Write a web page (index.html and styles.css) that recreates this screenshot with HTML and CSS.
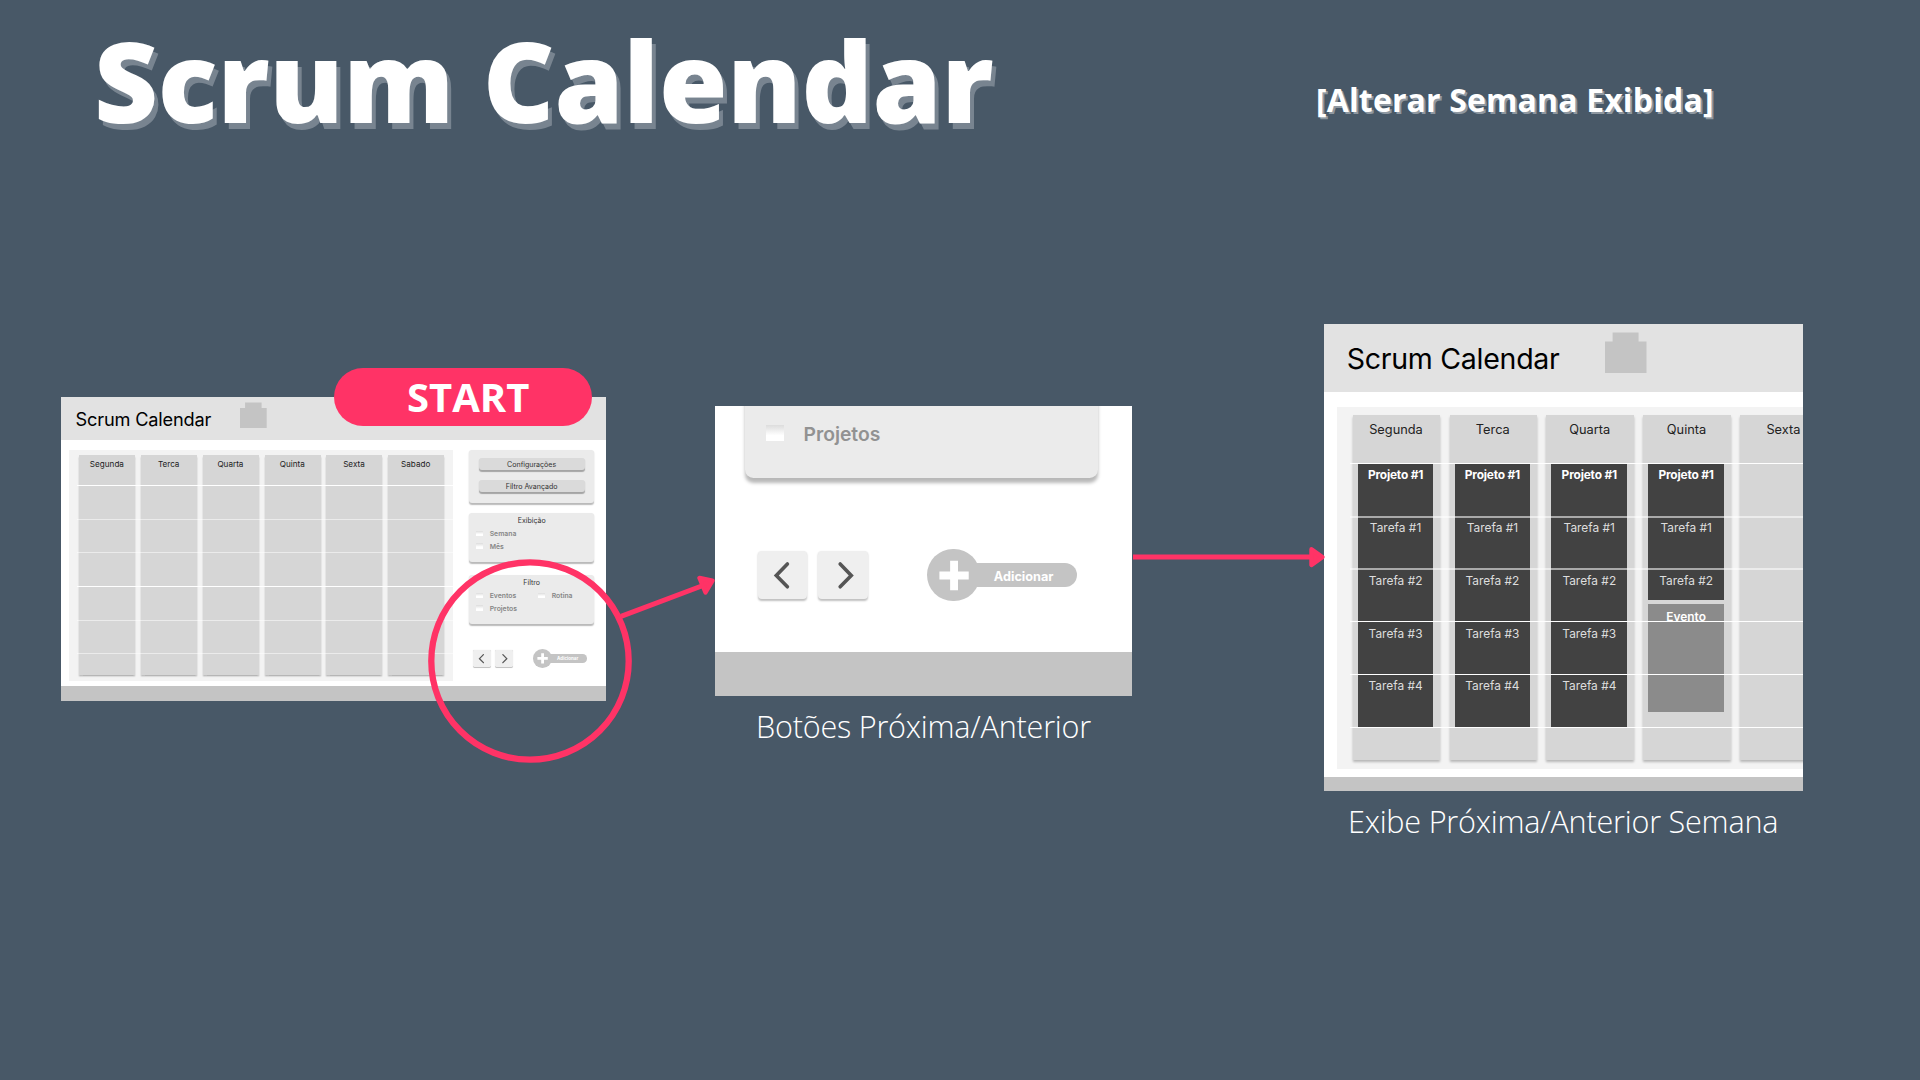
FILE: index.html
```html
<!DOCTYPE html>
<html lang="pt-BR">
<head>
<meta charset="utf-8">
<title>Scrum Calendar</title>
<link rel="stylesheet" href="styles.css">
</head>
<body>
<header class="top">
  <h1 class="title">Scrum Calendar</h1>
  <h2 class="subtitle">[Alterar Semana Exibida]</h2>
</header>
<main class="flow">
  <section class="screen home">
    <div class="bar"><span class="brand">Scrum Calendar</span><i class="logo"></i></div>
    <div class="content">
      <div class="week">
        <div class="day"><b>Segunda</b></div>
        <div class="day"><b>Terca</b></div>
        <div class="day"><b>Quarta</b></div>
        <div class="day"><b>Quinta</b></div>
        <div class="day"><b>Sexta</b></div>
        <div class="day"><b>Sabado</b></div>
        <div class="lines"><i></i><i></i><i></i><i></i><i></i><i></i></div>
      </div>
      <aside class="side">
        <div class="panel actions"><span class="btn">Configurações</span><span class="btn">Filtro Avançado</span></div>
        <div class="panel view">
          <h3>Exibição</h3>
          <div class="checks"><label><i></i>Semana</label><label class="first"><i></i>Mês</label></div>
        </div>
        <div class="panel filter">
          <h3>Filtro</h3>
          <div class="checks"><label><i></i>Eventos</label><label><i></i>Rotina</label><label><i></i>Projetos</label></div>
        </div>
        <div class="nav">
          <span class="step"><svg viewBox="0 0 18 17"><path d="M10.600 4.500 6.600 8.600l4 4.100"/></svg></span>
          <span class="step"><svg viewBox="0 0 18 17"><path d="m8 4.500 4 4.100-4 4.100"/></svg></span>
          <span class="add"><i class="plus"><svg viewBox="0 0 18.7 18.7"><path d="M9.600 4.200v10.400M4.400 9.400h10.400"/></svg></i><em>Adicionar</em></span>
        </div>
      </aside>
    </div>
    <div class="foot"></div>
  </section>

  <section class="screen detail">
    <aside class="side">
      <div class="panel filter">
        <div class="checks"><label><i></i>Eventos</label><label><i></i>Rotina</label><label><i></i>Projetos</label></div>
      </div>
      <div class="nav">
        <span class="step"><svg viewBox="0 0 18 17"><path d="M10.600 4.500 6.600 8.600l4 4.100"/></svg></span>
        <span class="step"><svg viewBox="0 0 18 17"><path d="m8 4.500 4 4.100-4 4.100"/></svg></span>
        <span class="add"><i class="plus"><svg viewBox="0 0 18.7 18.7"><path d="M9.600 4.200v10.400M4.400 9.400h10.400"/></svg></i><em>Adicionar</em></span>
      </div>
    </aside>
    <div class="foot"></div>
  </section>
  <p class="caption caption-detail">Botões Próxima/Anterior</p>

  <section class="screen result">
    <div class="bar"><span class="brand">Scrum Calendar</span><i class="logo"></i></div>
    <div class="content">
      <div class="week">
        <div class="day"><b>Segunda</b><p class="task project">Projeto #1</p><p class="task">Tarefa #1</p><p class="task">Tarefa #2</p><p class="task">Tarefa #3</p><p class="task">Tarefa #4</p></div>
        <div class="day"><b>Terca</b><p class="task project">Projeto #1</p><p class="task">Tarefa #1</p><p class="task">Tarefa #2</p><p class="task">Tarefa #3</p><p class="task">Tarefa #4</p></div>
        <div class="day"><b>Quarta</b><p class="task project">Projeto #1</p><p class="task">Tarefa #1</p><p class="task">Tarefa #2</p><p class="task">Tarefa #3</p><p class="task">Tarefa #4</p></div>
        <div class="day"><b>Quinta</b><p class="task project">Projeto #1</p><p class="task">Tarefa #1</p><p class="task short">Tarefa #2</p><p class="task event">Evento</p></div>
        <div class="day"><b>Sexta</b></div>
        <div class="lines"><i></i><i></i><i></i><i></i><i></i><i></i></div>
      </div>
    </div>
    <div class="foot"></div>
  </section>
  <p class="caption caption-result">Exibe Próxima/Anterior Semana</p>

  <span class="start">START</span>
  <svg class="marks" viewBox="0 0 1920 1080">
    <circle cx="530" cy="661" r="98.700" fill="none" stroke-width="6.300"/>
    <path d="M621 616.300 703 585.500M1133 557h180" fill="none" stroke-width="5"/>
    <path d="m699.500 578 13 2.600-7 11.900zM1311.500 549.200l10.800 7.900-10.800 7.900z" stroke-width="4.400" stroke-linejoin="round"/>
  </svg>
</main>
</body>
</html>
```
FILE: styles.css
```css
* { box-sizing: border-box; }
body {
  margin: 0;
  width: 1920px;
  height: 1080px;
  overflow: hidden;
  position: relative;
  background: #485867;
  color: #fff;
  font-family: "Open Sans", sans-serif;
}
h1, h2, h3, p { margin: 0; }
i, em { font-style: normal; }

.top { display: flex; padding-left: 94px; height: 160px; }
.title {
  width: 1222px;
  font-size: 111px;
  font-weight: 800;
  line-height: 160px;
  letter-spacing: -.25px;
  text-shadow: 4px 6px 0 #788490;
  white-space: nowrap;
}
.subtitle {
  font-size: 32px;
  font-weight: 700;
  line-height: 200px;
  letter-spacing: .14px;
  text-shadow: 2px 2px 0 #8f98a1;
  white-space: nowrap;
}

/* Screens share one layout; --u is the zoom of each one */
.screen {
  position: absolute;
  display: flex;
  flex-direction: column;
  overflow: hidden;
  background: #fff;
  color: #222;
  font-family: Inter, sans-serif;
}
.home { --u: 1px; left: 61px; top: 397px; width: 545px; height: 303.500px; }
.detail { --u: 2.82px; left: 715px; top: 406px; width: 417px; height: 289.500px; justify-content: flex-end; align-items: flex-end; }
.result { --u: 1.568px; left: 1324px; top: 324px; width: 479px; height: 467px; }

.bar {
  flex: none;
  display: flex;
  height: calc(43.400 * var(--u));
  padding-left: calc(14.500 * var(--u));
  background: #e2e2e2;
  color: #000;
}
.brand {
  width: calc(164.500 * var(--u));
  font-size: calc(18.200 * var(--u));
  line-height: calc(44.400 * var(--u));
  letter-spacing: -.0095em;
  white-space: nowrap;
}
.logo {
  width: calc(26.700 * var(--u));
  height: calc(26 * var(--u));
  margin-top: calc(5.400 * var(--u));
  background: #c4c4c4;
  clip-path: polygon(19% 0, 81% 0, 81% 22%, 100% 22%, 100% 100%, 0 100%, 0 22%, 19% 22%);
}
.content {
  flex: none;
  display: flex;
  height: calc(245.400 * var(--u));
  padding: calc(9.600 * var(--u)) 0 0 calc(8.300 * var(--u));
}
.week {
  position: relative;
  flex: none;
  display: flex;
  gap: calc(5.780 * var(--u));
  width: calc(383.700 * var(--u));
  height: calc(230.600 * var(--u));
  padding: calc(5.200 * var(--u)) 0 0 calc(10 * var(--u));
  background: #f3f3f3;
}
.day {
  flex: none;
  width: calc(56 * var(--u));
  height: calc(219.600 * var(--u));
  background: #d6d6d6;
  box-shadow: 0 calc(1.500 * var(--u)) calc(1.500 * var(--u)) rgba(0, 0, 0, .25);
  text-align: center;
  font-size: calc(8.150 * var(--u));
}
.day b {
  display: block;
  height: calc(30.600 * var(--u));
  padding-right: calc(.800 * var(--u));
  line-height: calc(19.300 * var(--u));
  font-weight: 400;
}
.home .day b { line-height: 18.300px; }
.lines {
  position: absolute;
  left: calc(8 * var(--u));
  right: 0;
  top: calc(35.600 * var(--u));
}
.home .lines { top: 35px; }
.lines i { display: block; height: calc(33.660 * var(--u)); border-top: 1px solid rgba(255, 255, 255, .5); }
.home .lines i:nth-child(3n + 1) { border-color: #fff; }
.result .lines i { border-color: #fff; }
.result .lines i:nth-child(2), .result .lines i:nth-child(3) { border-top-width: 2px; border-color: rgba(255, 255, 255, .55); }

.task {
  width: calc(48.300 * var(--u));
  height: calc(33.660 * var(--u));
  margin: 0 0 0 calc(3.200 * var(--u));
  background: #424242;
  color: #ddd;
  font-size: calc(7.600 * var(--u));
  line-height: calc(15.600 * var(--u));
}
.project { color: #fff; font-weight: 700; letter-spacing: -.015em; }
.short { height: calc(20 * var(--u)); margin-bottom: calc(2.600 * var(--u)); }
.event { height: calc(68.700 * var(--u)); background: #8b8b8b; color: #fff; font-weight: 600; line-height: calc(16 * var(--u)); }

.side {
  flex: none;
  width: calc(125.300 * var(--u));
  margin-left: calc(16 * var(--u));
  color: #333;
}
.detail .side { margin-right: calc(11.900 * var(--u)); }
.panel {
  background: #ebebeb;
  border-radius: calc(3 * var(--u));
  box-shadow: 0 calc(1.500 * var(--u)) calc(1.300 * var(--u)) rgba(0, 0, 0, .28);
}
.actions { display: flex; flex-direction: column; gap: calc(10.200 * var(--u)); height: calc(53.500 * var(--u)); padding: calc(8 * var(--u)) calc(9.600 * var(--u)); }
.btn {
  height: calc(12 * var(--u));
  border-radius: calc(3 * var(--u));
  background: #dadada;
  box-shadow: 0 calc(1.200 * var(--u)) calc(1 * var(--u)) rgba(0, 0, 0, .3);
  font-size: calc(7.050 * var(--u));
  line-height: calc(13 * var(--u));
  text-align: center;
}
.view { height: calc(49 * var(--u)); margin-top: calc(9.500 * var(--u)); }
.filter { height: calc(49 * var(--u)); margin-top: calc(13 * var(--u)); }
.panel h3 {
  height: calc(15.200 * var(--u));
  font-size: calc(7 * var(--u));
  line-height: calc(16.500 * var(--u));
  font-weight: 400;
  text-align: center;
}
.checks { display: grid; grid-template-columns: calc(62 * var(--u)) auto; padding-left: calc(7.500 * var(--u)); }
.checks label {
  display: flex;
  height: calc(12.700 * var(--u));
  font-size: calc(6.850 * var(--u));
  line-height: calc(12.700 * var(--u));
  font-weight: 600;
  color: #868686;
}
.detail .checks { padding-top: calc(14.600 * var(--u)); }
.detail .checks label { height: calc(13 * var(--u)); line-height: calc(12.700 * var(--u)); color: #929292; }
.checks .first { grid-column: 1; }
.view label:first-child { grid-column: 1 / 3; }
.checks i {
  width: calc(6.300 * var(--u));
  height: calc(5.700 * var(--u));
  margin: calc(2.600 * var(--u)) calc(6.900 * var(--u)) 0 0;
  background: linear-gradient(#dcdcdc, #fff 65%);
}
.nav { display: flex; align-items: center; height: calc(17 * var(--u)); margin: calc(26 * var(--u)) 0 calc(18.800 * var(--u)) calc(4.400 * var(--u)); }
.step {
  width: calc(17.700 * var(--u));
  height: calc(17.100 * var(--u));
  margin-right: calc(3.900 * var(--u));
  border-radius: calc(1.400 * var(--u));
  background: #efefef;
  box-shadow: 0 calc(.500 * var(--u)) calc(.700 * var(--u)) rgba(0, 0, 0, .25);
}
.nav svg { display: block; width: 100%; height: 100%; fill: none; stroke: #555; stroke-width: 1.300; stroke-linecap: round; }
.add { display: flex; align-items: center; margin-left: calc(16.900 * var(--u)); }
.plus { width: calc(18.700 * var(--u)); height: calc(18.700 * var(--u)); border-radius: 50%; background: #c4c4c4; }
.plus svg { stroke: #fff; stroke-width: 2.800; stroke-linecap: butt; }
.add em {
  width: calc(36.200 * var(--u));
  height: calc(8.600 * var(--u));
  margin-left: calc(-1.700 * var(--u));
  padding-left: calc(6.700 * var(--u));
  border-radius: 0 calc(4.300 * var(--u)) calc(4.300 * var(--u)) 0;
  background: #c4c4c4;
  color: #fff;
  font-size: calc(4.500 * var(--u));
  font-weight: 700;
  line-height: calc(9.600 * var(--u));
}
.foot { flex: none; width: 100%; height: calc(15.400 * var(--u)); background: #c4c4c4; }

.caption { position: absolute; font-size: 30.600px; font-weight: 300; line-height: 40px; letter-spacing: -.22px; white-space: nowrap; }
.caption-detail { left: 756px; top: 706px; }
.caption-result { left: 1348px; top: 801px; }

.start {
  position: absolute;
  left: 334px;
  top: 368px;
  width: 257.500px;
  height: 57.500px;
  padding-left: 11px;
  border-radius: 29px;
  background: #ff3366;
  font-size: 40px;
  font-weight: 700;
  line-height: 57px;
  text-align: center;
}
.marks { position: absolute; left: 0; top: 0; width: 1920px; height: 1080px; fill: #ff3366; stroke: #ff3366; }
```
